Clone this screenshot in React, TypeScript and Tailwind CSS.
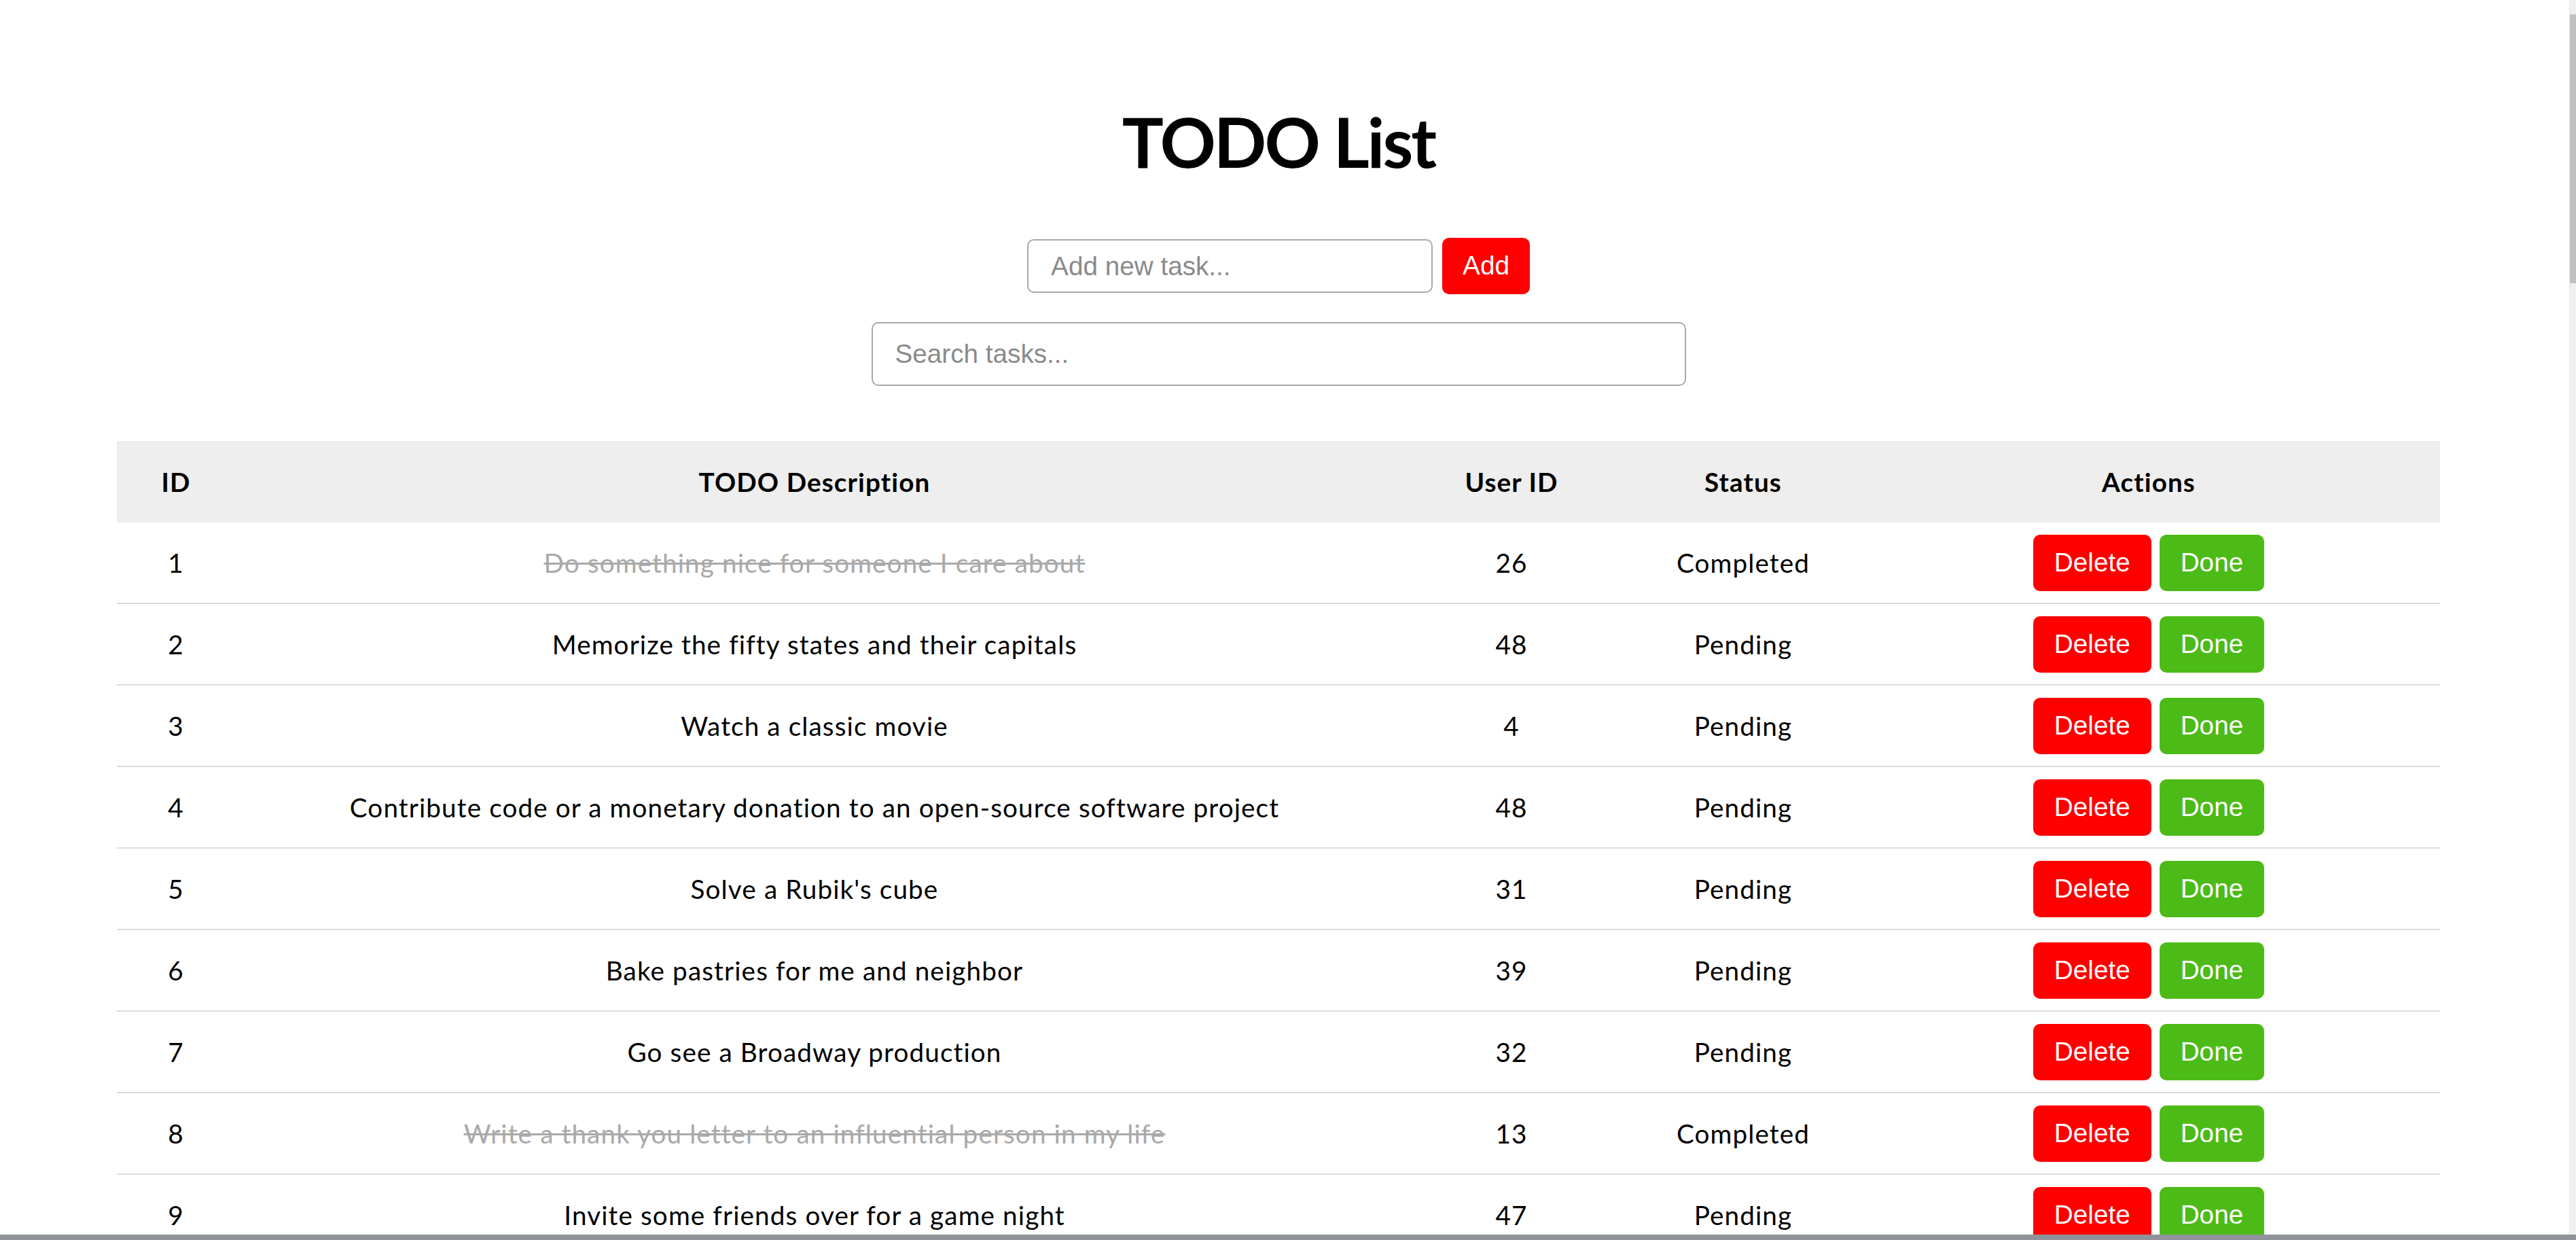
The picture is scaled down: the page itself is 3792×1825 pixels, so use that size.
import { useState } from "react";

type Todo = { id: number; todo: string; userId: number; completed: boolean };

const initialTodos: Todo[] = [
  { id: 1, todo: "Do something nice for someone I care about", userId: 26, completed: true },
  { id: 2, todo: "Memorize the fifty states and their capitals", userId: 48, completed: false },
  { id: 3, todo: "Watch a classic movie", userId: 4, completed: false },
  { id: 4, todo: "Contribute code or a monetary donation to an open-source software project", userId: 48, completed: false },
  { id: 5, todo: "Solve a Rubik's cube", userId: 31, completed: false },
  { id: 6, todo: "Bake pastries for me and neighbor", userId: 39, completed: false },
  { id: 7, todo: "Go see a Broadway production", userId: 32, completed: false },
  { id: 8, todo: "Write a thank you letter to an influential person in my life", userId: 13, completed: true },
  { id: 9, todo: "Invite some friends over for a game night", userId: 47, completed: false },
  { id: 10, todo: "Have a football scrimmage with some friends", userId: 19, completed: false },
];

export default function App() {
  const [todos, setTodos] = useState(initialTodos);
  const [draft, setDraft] = useState("");
  const [query, setQuery] = useState("");

  const shown = todos.filter((t) => t.todo.toLowerCase().includes(query.toLowerCase()));

  function addTodo() {
    if (!draft.trim()) return;
    setTodos([...todos, { id: todos.length + 1, todo: draft.trim(), userId: 1, completed: false }]);
    setDraft("");
  }

  return (
    <div className="flex h-[1825px] flex-col overflow-hidden bg-white text-black [font-family:Lato,'Noto_Sans',sans-serif]">
      <div className="flex min-h-0 flex-1">
        <div className="min-w-0 flex-1 overflow-hidden">
          <div className="flex w-[3764px] flex-col items-center px-[172px]">
            <h1 className="mt-[157px] text-[102px] font-bold leading-none tracking-[-3px]">TODO List</h1>

            <div className="mt-[91px] flex items-center gap-[14px]">
              <input
                value={draft}
                onChange={(e) => setDraft(e.target.value)}
                placeholder="Add new task..."
                className="h-[79px] w-[597px] rounded-[10px] border-2 border-[#a9a9a9] px-[33px] text-[38.7px] outline-none [font-family:'Liberation_Sans',Arial,sans-serif] placeholder:text-[#8a8a8a]"
              />
              <button
                onClick={addTodo}
                className="flex h-[83px] items-center rounded-[10px] bg-[#ff0000] px-[30px] text-[38.7px] text-white [font-family:'Liberation_Sans',Arial,sans-serif]"
              >
                Add
              </button>
            </div>

            <input
              value={query}
              onChange={(e) => setQuery(e.target.value)}
              placeholder="Search tasks..."
              className="mt-[41px] h-[94px] w-[1199px] rounded-[10px] border-2 border-[#a9a9a9] px-[33px] text-[38.7px] outline-none [font-family:'Liberation_Sans',Arial,sans-serif] placeholder:text-[#8a8a8a]"
            />

            <table className="mt-[81px] w-[3420px] table-fixed border-separate border-spacing-0 text-[38.7px] tracking-[1.1px]">
              <colgroup>
                <col className="w-[174px]" />
                <col className="w-[1706px]" />
                <col className="w-[346px]" />
                <col className="w-[336px]" />
                <col className="w-[858px]" />
              </colgroup>
              <thead>
                <tr className="bg-[#eeeeee]">
                  <th className="h-[120px] text-center font-bold">ID</th>
                  <th className="h-[120px] text-center font-bold">TODO Description</th>
                  <th className="h-[120px] text-center font-bold">User ID</th>
                  <th className="h-[120px] text-center font-bold">Status</th>
                  <th className="h-[120px] text-center font-bold">Actions</th>
                </tr>
              </thead>
              <tbody>
                {shown.map((t) => (
                  <tr key={t.id}>
                    <td className="h-[120px] border-b-2 border-[#dddddd] text-center">{t.id}</td>
                    <td
                      className={`h-[120px] border-b-2 border-[#dddddd] text-center ${
                        t.completed ? "text-[#a9a9a9] line-through" : ""
                      }`}
                    >
                      {t.todo}
                    </td>
                    <td className="h-[120px] border-b-2 border-[#dddddd] text-center">{t.userId}</td>
                    <td className="h-[120px] border-b-2 border-[#dddddd] text-center">
                      {t.completed ? "Completed" : "Pending"}
                    </td>
                    <td className="h-[120px] border-b-2 border-[#dddddd]">
                      <div className="flex justify-center gap-[12px] tracking-normal [font-family:'Liberation_Sans',Arial,sans-serif]">
                        <button
                          onClick={() => setTodos(todos.filter((x) => x.id !== t.id))}
                          className="flex h-[83px] items-center rounded-[10px] bg-[#ff0000] px-[31px] text-white"
                        >
                          Delete
                        </button>
                        <button
                          onClick={() =>
                            setTodos(todos.map((x) => (x.id === t.id ? { ...x, completed: !x.completed } : x)))
                          }
                          className="flex h-[83px] items-center rounded-[10px] bg-[#4cbb17] px-[31px] text-white"
                        >
                          Done
                        </button>
                      </div>
                    </td>
                  </tr>
                ))}
              </tbody>
            </table>
          </div>
        </div>
        {/* scrollbar */}
        <div className="flex w-[10px] flex-col border-l border-[#e6e6e6] bg-[#f0f0f0]">
          <div className="mt-[21px] h-[396px] bg-[#c1c1c1]" />
        </div>
      </div>
      <div className="h-[8px] bg-[#909399]" />
    </div>
  );
}
